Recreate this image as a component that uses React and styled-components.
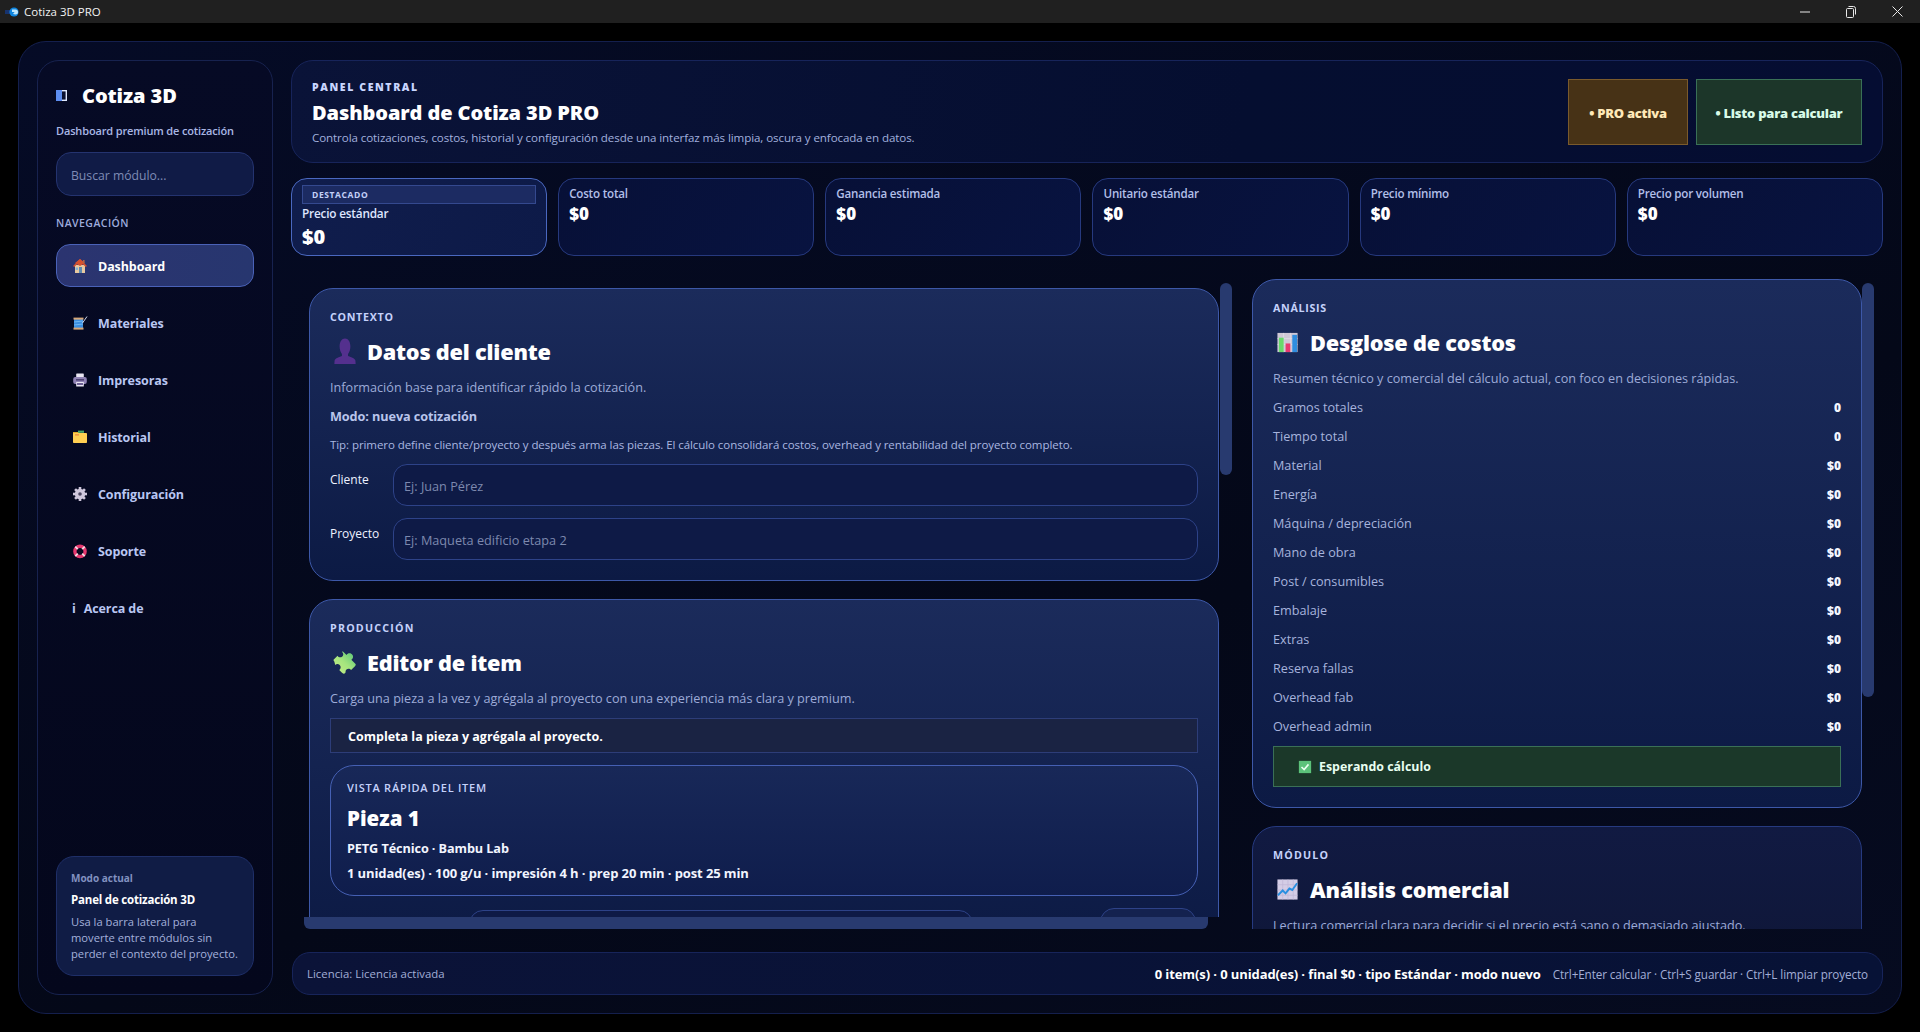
import React from "react";
import styled, { createGlobalStyle } from "styled-components";

const Global = createGlobalStyle`
  html, body { margin: 0; padding: 0; background: #000; }
  * { box-sizing: border-box; }
  body { font-family: "Open Sans", "Noto Sans", sans-serif; color: #fff; overflow: hidden; }
`;

const Window = styled.div`width:1920px;height:1032px;display:flex;flex-direction:column;background:#000;overflow:hidden;`;
const TitleBar = styled.header`height:23px;flex:none;background:#202020;display:flex;align-items:center;padding-left:5px;`;
const AppName = styled.span`font-size:11.5px;color:#f2f2f2;margin-left:5px;`;
const Controls = styled.div`margin-left:auto;display:flex;height:100%;`;
const Control = styled.div`width:46px;display:flex;align-items:center;justify-content:center;`;
const Stage = styled.div`flex:1;min-height:0;padding:18px 18px 18px 18px;display:flex;`;
const Shell = styled.div`flex:1;border:1px solid #141f4d;border-radius:28px;background:linear-gradient(160deg,#050b26,#040818 60%,#060b20);padding:18px;display:grid;grid-template-columns:236px 1fr;gap:18px;min-width:0;`;

const Sidebar = styled.aside`border:1px solid #17224f;border-radius:22px;background:linear-gradient(180deg,#060a25,#04071c);padding:19px 18px 18px 18px;display:flex;flex-direction:column;`;
const Brand = styled.div`height:30px;display:flex;align-items:center;gap:15px;`;
const BrandName = styled.div`font-size:20px;font-weight:800;letter-spacing:-0.1px;`;
const BrandSub = styled.div`margin-top:13px;font-size:11px;line-height:16px;font-weight:600;color:#a9b7e4;letter-spacing:-0.15px;`;
const SearchBox = styled.div`margin-top:13px;height:44px;border:1px solid #24336f;border-radius:15px;background:#101b46;display:flex;align-items:center;padding:2px 0 0 14px;font-size:12.2px;color:#7f8bb5;`;
const NavTitle = styled.div`margin-top:19px;font-size:10.5px;line-height:16px;font-weight:600;letter-spacing:0.45px;color:#9dabdc;`;
const Nav = styled.nav`margin-top:13px;display:flex;flex-direction:column;gap:14px;`;
const NavItem = styled.div`
  height:43px;border-radius:14px;display:flex;align-items:center;gap:${p=>p.$about?"8px":"11px"};
  padding:1px 0 0 ${p=>p.$about?"15px":"16px"};font-size:12.5px;font-weight:700;letter-spacing:-0.1px;
  color:${p=>p.$active?"#fff":"#b9c6f2"};
  border:1px solid ${p=>p.$active?"#4a62b8":"transparent"};
  background:${p=>p.$active?"linear-gradient(90deg,#2b3470,#27366f)":"transparent"};
`;
const NavGlyph = styled.span`width:14px;height:14px;flex:none;display:flex;align-items:center;justify-content:center;margin-top:-1px;`;
const ModeCard = styled.div`margin-top:auto;border:1px solid #1f2f68;border-radius:18px;background:#101c45;padding:14px 13px 13px 14px;`;
const ModeTag = styled.div`font-size:10px;line-height:14px;font-weight:700;color:#8291c0;`;
const ModeName = styled.div`margin-top:7px;font-size:11.5px;line-height:16px;font-weight:700;letter-spacing:-0.2px;`;
const ModeText = styled.div`margin-top:6px;font-size:11.2px;line-height:16px;color:#a4b1dc;`;

const Main = styled.main`display:flex;flex-direction:column;min-width:0;min-height:0;`;
const Hero = styled.section`height:103px;flex:none;border:1px solid #17245a;border-radius:22px;background:linear-gradient(100deg,#0a1338,#050e30 60%,#050d32);padding:2px 20px 0;display:flex;align-items:center;justify-content:space-between;`;
const HeroText = styled.div`display:flex;flex-direction:column;`;
const HeroTag = styled.div`font-size:10.5px;line-height:16px;font-weight:800;letter-spacing:1.6px;color:#c9d6ff;`;
const HeroTitle = styled.h1`margin:4px 0 0;font-size:20px;line-height:28px;font-weight:800;letter-spacing:-0.1px;`;
const HeroDesc = styled.p`margin:2px 0 0;font-size:11.6px;line-height:18px;color:#a2b0de;letter-spacing:-0.1px;`;
const Badges = styled.div`display:flex;gap:8px;margin-top:-2px;`;
const Badge = styled.div`
  height:66px;display:flex;align-items:center;justify-content:center;font-size:13px;font-weight:800;letter-spacing:-0.25px;padding-top:2px;
  width:${p=>p.$w}px;
  color:${p=>p.$tone==="gold"?"#ffe9b8":"#d8fbe8"};
  background:${p=>p.$tone==="gold"?"#473216":"#1c3629"};
  border:1px solid ${p=>p.$tone==="gold"?"#7a5a2c":"#3a7056"};
`;

const Stats = styled.section`margin-top:15px;height:78px;flex:none;display:grid;grid-template-columns:repeat(6,1fr);gap:11px;`;
const Stat = styled.div`
  border:1px solid ${p=>p.$featured?"#4a68c0":"#26397e"};border-radius:16px;padding:${p=>p.$featured?"6px 10px 0":"7px 10px 0"};
  background:${p=>p.$featured?"linear-gradient(120deg,#101d4c,#0d1a48)":"linear-gradient(120deg,#071037,#081340)"};
`;
const StatChip = styled.div`height:19px;border:1px solid #34498f;background:#1c2b62;padding-left:9px;font-size:8.5px;line-height:17px;font-weight:700;letter-spacing:0.6px;color:#c3d0f8;`;
const StatLabel = styled.div`font-size:${p=>p.$featured?"11.8px":"11.6px"};line-height:16px;font-weight:600;letter-spacing:-0.2px;color:${p=>p.$featured?"#dfe6ff":"#b2bfe8"};${p=>p.$featured?"margin-top:1px;":""}`;
const StatValue = styled.div`font-size:${p=>p.$featured?"20px":"17px"};line-height:${p=>p.$featured?"26px":"24px"};font-weight:800;${p=>p.$featured?"margin-top:3px;":""}`;

const Content = styled.div`flex:1;min-height:0;margin-top:23px;display:grid;grid-template-columns:949px 1fr;gap:12px;`;
const Pane = styled.div`position:relative;overflow:hidden;min-height:0;`;
const LeftScroll = styled.div`height:638px;overflow:hidden;padding:9px 21px 0 18px;display:flex;flex-direction:column;gap:18px;`;
const RightScroll = styled.div`height:100%;overflow:hidden;padding-right:21px;display:flex;flex-direction:column;gap:18px;`;
const VThumb = styled.div`position:absolute;top:4px;right:${p=>p.$right}px;width:12px;height:${p=>p.$h}px;background:#283a6f;border-radius:6px;`;
const HThumb = styled.div`position:absolute;left:13px;bottom:0;width:904px;height:12px;background:#283a6f;border-radius:0 0 6px 6px;`;

const Card = styled.article`
  flex:none;border:1px solid ${p=>p.$muted?"#263a80":"#3d58a8"};border-radius:24px;padding:20px;display:flex;flex-direction:column;gap:11px;
  background:${p=>p.$muted?"linear-gradient(180deg,#111a42,#0f1739)":"linear-gradient(180deg,#1b2b5b,#0c1a44)"};
`;
const Eyebrow = styled.div`font-size:10.7px;line-height:16px;font-weight:700;letter-spacing:${p=>p.$wide?"1.2px":"0.7px"};color:#c5d2fb;`;
const CardTitle = styled.h2`margin:-1px 0 1px;height:32px;padding-left:3px;display:flex;align-items:center;gap:11px;font-size:21.7px;font-weight:800;letter-spacing:-0.2px;`;
const Desc = styled.p`margin:-1px 0 1px;font-size:12.65px;line-height:18px;color:#9dabd8;white-space:nowrap;`;
const ModeLine = styled.div`margin:-1px 0 1px;font-size:12.7px;line-height:18px;font-weight:700;letter-spacing:-0.1px;color:#b9c5ec;`;
const Tip = styled.div`font-size:11.5px;line-height:16px;color:#aab7e0;letter-spacing:-0.07px;`;
const Fields = styled.div`display:flex;flex-direction:column;gap:12px;`;
const Field = styled.div`display:grid;grid-template-columns:63px 1fr;`;
const FieldLabel = styled.label`font-size:12px;line-height:16px;margin-top:8px;color:#eef2ff;`;
const FieldInput = styled.div`height:42px;border:1px solid #2d4288;border-radius:14px;background:#0e1a46;display:flex;align-items:center;padding:2px 0 0 10px;font-size:12.7px;color:#7d89ae;`;
const Notice = styled.div`height:35px;border:1px solid #2d3d78;background:#1a2343;display:flex;align-items:center;padding:1px 0 0 17px;font-size:12.5px;font-weight:700;margin-top:-1px;`;
const Quick = styled.div`margin-top:1px;height:131px;border:1px solid #4560b4;border-radius:24px;background:linear-gradient(180deg,#182858,#0f1d4c);padding:14px 16px 0;display:flex;flex-direction:column;`;
const QuickTag = styled.div`font-size:11px;line-height:16px;font-weight:600;letter-spacing:0.75px;color:#c5d2fb;`;
const QuickTitle = styled.div`margin-top:8px;font-size:20.5px;line-height:28px;font-weight:800;`;
const QuickLine = styled.div`margin-top:${p=>p.$gap}px;font-size:${p=>p.$size}px;line-height:18px;font-weight:700;color:#f2f5ff;letter-spacing:-0.1px;`;
const PeekRow = styled.div`margin-top:1px;height:20px;display:grid;grid-template-columns:139px 504px 127px 96px;`;
const PeekInput = styled.div`grid-column:2;margin-top:2px;height:30px;border:1px solid #2d4288;border-radius:14px;background:#0e1a46;`;
const PeekButton = styled.div`grid-column:4;height:30px;border:1px solid #2d4288;border-radius:14px;background:#14224f;`;

const Rows = styled.div`display:flex;flex-direction:column;gap:11px;margin-top:-1px;`;
const Row = styled.div`display:flex;justify-content:space-between;align-items:center;height:18px;font-size:12.65px;color:#a7b4dd;`;
const RowValue = styled.span`font-weight:800;font-size:12px;color:#f4f6ff;`;
const Alert = styled.div`height:41px;margin-top:0;border:1px solid #3a7056;background:#1b3829;display:flex;align-items:center;gap:7px;padding-left:24px;font-size:12.4px;font-weight:700;color:#e8fff1;`;

const Footer = styled.footer`margin-top:23px;height:43px;flex:none;margin-left:1px;border:1px solid #17245a;border-radius:18px;background:linear-gradient(90deg,#0b1338,#071236);display:flex;align-items:center;justify-content:space-between;padding:0 14px;`;
const License = styled.span`font-size:11.4px;color:#a2aed6;`;
const FooterRight = styled.div`display:flex;align-items:center;gap:12px;`;
const FooterSummary = styled.span`font-size:13px;font-weight:700;letter-spacing:-0.1px;`;
const FooterKeys = styled.span`font-size:11.7px;color:#a2aed6;letter-spacing:-0.1px;`;

const Svg = ({ s = 16, vb = 16, children }) => <svg width={s} height={s} viewBox={`0 0 ${vb} ${vb}`} style={{display:"block",flex:"none"}}>{children}</svg>;

const LogoIcon = () => (
  <svg width="14" height="12" viewBox="0 0 14 12"><path d="M0 4h6v4H0z" fill="#17336e"/><circle cx="9" cy="6" r="4.6" fill="#0f86e0"/><path d="M7 3.5h3.5a2.5 2.5 0 0 1 0 5L8 8l1.6-2H7z" fill="#bfe8ff"/></svg>
);
const BrandIcon = () => (
  <svg width="11" height="11" viewBox="0 0 11 11"><rect width="11" height="11" fill="#dfe8ff"/><rect x="0" y="0" width="6" height="11" fill="#5d8df0"/><rect x="6" y="1.4" width="3.6" height="8.2" fill="#0a1030"/></svg>
);
const House = () => (
  <Svg><path d="M3 7v8h10V7z" fill="#e8c9a0"/><path d="M8 1 1 8l1.2 1L8 3.4 13.8 9 15 8z" fill="#d5512f"/><path d="M3 5 8 1l5 4-5 3z" fill="#d5512f"/><rect x="7" y="9" width="3" height="6" fill="#5f8ab0"/><rect x="3.6" y="9.5" width="2.4" height="2.4" fill="#7fb2d6"/><rect x="11" y="2" width="1.6" height="3" fill="#a8664a"/></Svg>
);
const Spool = () => (
  <Svg><rect x="2" y="4" width="9" height="9" fill="#3b8ee0"/><rect x="1.5" y="2.6" width="10" height="2" fill="#d8a878"/><rect x="1.5" y="12.6" width="10" height="2" fill="#d8a878"/><path d="M2 7l9-1M2 10l9-1" stroke="#7cc0f5" strokeWidth=".8"/><path d="M10.5 8 15 1.5" stroke="#cfd6e8" strokeWidth="1"/></Svg>
);
const Printer = () => (
  <Svg><rect x="4.2" y="1.5" width="7.6" height="4" rx=".6" fill="#e9e6f2"/><rect x="1.2" y="5" width="13.6" height="7" rx="2" fill="#8f82b4"/><rect x="4" y="7" width="8" height="1.6" fill="#4d4273"/><rect x="4.2" y="10" width="7.6" height="4.5" rx=".5" fill="#e9e6f2"/><rect x="5" y="11" width="6" height="2" fill="#6d6094"/></Svg>
);
const Folder = () => (
  <Svg><path d="M1 3h6l1 1.2V6H1z" fill="#e2a92a"/><rect x="6" y="1.6" width="6" height="2.2" fill="#49a86a"/><rect x="1" y="4" width="14" height="10" rx=".8" fill="#ffcf52"/><rect x="3" y="5.4" width="4" height="1" fill="#e8743a"/></Svg>
);
const Gear = () => (
  <Svg><g fill="#cfc8dc"><circle cx="8" cy="8" r="5.2"/>{[0,45,90,135,180,225,270,315].map(a=><rect key={a} x="6.7" y="1" width="2.6" height="3" transform={`rotate(${a} 8 8)`}/>)}</g><circle cx="8" cy="8" r="1.8" fill="#4a4560"/></Svg>
);
const Buoy = () => (
  <Svg><circle cx="8" cy="8.400" r="5.100" fill="none" stroke="#e6386f" strokeWidth="3.400"/><g stroke="#f6d8e2" strokeWidth="1.900"><path d="M3.300 3.700l2.500 2.500M12.700 3.700l-2.500 2.500M3.300 13.100l2.500-2.500M12.700 13.100l-2.500-2.500"/></g><circle cx="8" cy="8.400" r="2.200" fill="#0a0c22"/></Svg>
);
const Bust = () => (
  <svg width="22" height="26" viewBox="3 1 18 22" preserveAspectRatio="none" style={{display:"block",flex:"none",marginLeft:1}}><path d="M7.6 8.2C7.6 4.2 9.4 1.5 12 1.5s4.4 2.7 4.4 6.7c0 2.6-.8 5-1.9 6.4v1.7c3 .9 5.7 2.2 6 3.8.1 1.2.2 2 .2 3H3.3c0-1 .1-1.8.2-3 .3-1.6 3-2.9 6-3.8v-1.700C8.400 13.200 7.600 10.800 7.600 8.200z" fill="#54308e"/></svg>
);
const Puzzle = () => (
  <svg width="23" height="24" viewBox="1.500 2.500 19 20" style={{display:"block",flex:"none"}}>
    <defs><linearGradient id="pz" x1="0" y1="1" x2="1" y2="0"><stop offset="0" stopColor="#c8ee86"/><stop offset="0.5" stopColor="#a4e47e"/><stop offset="1" stopColor="#52c478"/></linearGradient></defs>
    <path d="M9.500 3.500l3.200 3.200c.9-1.800 3.800-2 5 .0.900 1.500.2 3.300-1 3.900l3.300 3.400c1 1-.1 1.800-.9 2.600l-2.600 2.600c-1.300-1.700-4.500-1.300-4.600 1.300 0 1-.1 1-.9 1.600-.9.500-1.600-.1-2.300-.8l-2.100-2.100c1.800-1.200 1.500-4.200-.6-4.800-1-.3-2-.1-2.700.6L2.500 12.100c-.8-.8-.9-1.500 0-2.200l2.700-2.700c1 2 4.200 1.600 4.700-.6.200-1-.2-1.900-.9-2.500z" fill="url(#pz)"/>
  </svg>
);
const Bars = () => (
  <Svg s={23} vb={24}><rect x="1.500" y="2" width="21" height="20" fill="#cfc8d6"/><path d="M1.500 8h21M1.500 14h21M8 2v20M15 2v20" stroke="#e6e2ea" strokeWidth=".7"/><rect x="3" y="7" width="5" height="15" fill="#68d96a"/><rect x="10" y="13" width="5" height="9" fill="#e8396f"/><rect x="17" y="4" width="5" height="18" fill="#2f8de0"/></Svg>
);
const Trend = () => (
  <Svg s={23} vb={24}><rect x="1.500" y="1.500" width="21" height="21" fill="#d4cde6"/><path d="M1.500 7h21M1.500 12.500h21M1.500 18h21M7 1.500v21M12.500 1.500v21M18 1.500v21" stroke="#bfb6d6" strokeWidth=".7"/><path d="M2 18l5-5 3 3 4-5 3 1.500 5-7" fill="none" stroke="#2a8fe0" strokeWidth="2"/></Svg>
);
const Check = () => (
  <Svg s={14}><rect x="1" y="1" width="14" height="14" fill="#5cc27a"/><path d="M4 8l3 3 5-6" fill="none" stroke="#eafff0" strokeWidth="1.800"/></Svg>
);

const navItems = [["Dashboard",House],["Materiales",Spool],["Impresoras",Printer],["Historial",Folder],["Configuración",Gear],["Soporte",Buoy]];
const stats = ["Costo total","Ganancia estimada","Unitario estándar","Precio mínimo","Precio por volumen"];
const rows = [["Gramos totales","0"],["Tiempo total","0"],["Material","$0"],["Energía","$0"],["Máquina / depreciación","$0"],["Mano de obra","$0"],["Post / consumibles","$0"],["Embalaje","$0"],["Extras","$0"],["Reserva fallas","$0"],["Overhead fab","$0"],["Overhead admin","$0"]];

export default function App() {
  return (
    <Window>
      <Global />
      <TitleBar>
        <LogoIcon />
        <AppName>Cotiza 3D PRO</AppName>
        <Controls>
          <Control><svg width="10" height="10" viewBox="0 0 10 10"><path d="M0 5h10" stroke="#e8e8e8"/></svg></Control>
          <Control><svg width="10" height="12" viewBox="0 0 10 12"><rect x=".5" y="2.500" width="7" height="9" rx="1" fill="none" stroke="#e8e8e8"/><path d="M2.500 .5h5a2 2 0 0 1 2 2v6" fill="none" stroke="#e8e8e8"/></svg></Control>
          <Control><svg width="11" height="11" viewBox="0 0 11 11"><path d="M.5.5l10 10M10.500.5l-10 10" stroke="#e8e8e8"/></svg></Control>
        </Controls>
      </TitleBar>
      <Stage>
        <Shell>
          <Sidebar>
            <Brand><BrandIcon /><BrandName>Cotiza 3D</BrandName></Brand>
            <BrandSub>Dashboard premium de cotización</BrandSub>
            <SearchBox>Buscar módulo...</SearchBox>
            <NavTitle>NAVEGACIÓN</NavTitle>
            <Nav>
              {navItems.map(([label, Icon], i) => (
                <NavItem key={label} $active={i === 0}><NavGlyph><Icon /></NavGlyph>{label}</NavItem>
              ))}
              <NavItem $about><span>i</span>Acerca de</NavItem>
            </Nav>
            <ModeCard>
              <ModeTag>Modo actual</ModeTag>
              <ModeName>Panel de cotización 3D</ModeName>
              <ModeText>Usa la barra lateral para moverte entre módulos sin perder el contexto del proyecto.</ModeText>
            </ModeCard>
          </Sidebar>
          <Main>
            <Hero>
              <HeroText>
                <HeroTag>PANEL CENTRAL</HeroTag>
                <HeroTitle>Dashboard de Cotiza 3D PRO</HeroTitle>
                <HeroDesc>Controla cotizaciones, costos, historial y configuración desde una interfaz más limpia, oscura y enfocada en datos.</HeroDesc>
              </HeroText>
              <Badges>
                <Badge $tone="gold" $w={120}>• PRO activa</Badge>
                <Badge $tone="green" $w={166}>• Listo para calcular</Badge>
              </Badges>
            </Hero>
            <Stats>
              <Stat $featured>
                <StatChip>DESTACADO</StatChip>
                <StatLabel $featured>Precio estándar</StatLabel>
                <StatValue $featured>$0</StatValue>
              </Stat>
              {stats.map(s => <Stat key={s}><StatLabel>{s}</StatLabel><StatValue>$0</StatValue></Stat>)}
            </Stats>
            <Content>
              <Pane>
                <LeftScroll>
                  <Card>
                    <Eyebrow>CONTEXTO</Eyebrow>
                    <CardTitle><Bust />Datos del cliente</CardTitle>
                    <Desc>Información base para identificar rápido la cotización.</Desc>
                    <ModeLine>Modo: nueva cotización</ModeLine>
                    <Tip>Tip: primero define cliente/proyecto y después arma las piezas. El cálculo consolidará costos, overhead y rentabilidad del proyecto completo.</Tip>
                    <Fields>
                      <Field><FieldLabel>Cliente</FieldLabel><FieldInput>Ej: Juan Pérez</FieldInput></Field>
                      <Field><FieldLabel>Proyecto</FieldLabel><FieldInput>Ej: Maqueta edificio etapa 2</FieldInput></Field>
                    </Fields>
                  </Card>
                  <Card>
                    <Eyebrow $wide>PRODUCCIÓN</Eyebrow>
                    <CardTitle><Puzzle />Editor de item</CardTitle>
                    <Desc>Carga una pieza a la vez y agrégala al proyecto con una experiencia más clara y premium.</Desc>
                    <Notice>Completa la pieza y agrégala al proyecto.</Notice>
                    <Quick>
                      <QuickTag>VISTA RÁPIDA DEL ITEM</QuickTag>
                      <QuickTitle>Pieza 1</QuickTitle>
                      <QuickLine $gap={7} $size={12.7}>PETG Técnico · Bambu Lab</QuickLine>
                      <QuickLine $gap={7} $size={13}>1 unidad(es) · 100 g/u · impresión 4 h · prep 20 min · post 25 min</QuickLine>
                    </Quick>
                    <PeekRow><PeekInput /><PeekButton /></PeekRow>
                  </Card>
                </LeftScroll>
                <VThumb $right={8} $h={192} />
                <HThumb />
              </Pane>
              <Pane>
                <RightScroll>
                  <Card>
                    <Eyebrow>ANÁLISIS</Eyebrow>
                    <CardTitle><Bars />Desglose de costos</CardTitle>
                    <Desc>Resumen técnico y comercial del cálculo actual, con foco en decisiones rápidas.</Desc>
                    <Rows>{rows.map(([k, v]) => <Row key={k}><span>{k}</span><RowValue>{v}</RowValue></Row>)}</Rows>
                    <Alert><Check />Esperando cálculo</Alert>
                  </Card>
                  <Card $muted>
                    <Eyebrow $wide>MÓDULO</Eyebrow>
                    <CardTitle><Trend />Análisis comercial</CardTitle>
                    <Desc>Lectura comercial clara para decidir si el precio está sano o demasiado ajustado.</Desc>
                  </Card>
                </RightScroll>
                <VThumb $right={9} $h={414} />
              </Pane>
            </Content>
            <Footer>
              <License>Licencia: Licencia activada</License>
              <FooterRight>
                <FooterSummary>0 item(s) · 0 unidad(es) · final $0 · tipo Estándar · modo nuevo</FooterSummary>
                <FooterKeys>Ctrl+Enter calcular · Ctrl+S guardar · Ctrl+L limpiar proyecto</FooterKeys>
              </FooterRight>
            </Footer>
          </Main>
        </Shell>
      </Stage>
    </Window>
  );
}
